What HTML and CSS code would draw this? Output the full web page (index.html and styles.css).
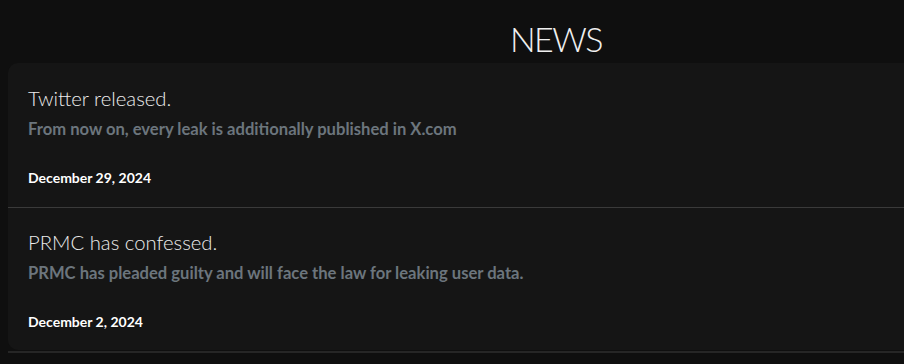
FILE: index.html
```html
<!DOCTYPE html>
<html lang="en">
<head>
    <meta charset="UTF-8">
    <meta name="viewport" content="width=device-width, initial-scale=1.0">
    <title>News</title>
    <link rel="stylesheet" href="styles.css">
</head>
<body>

    <!-- 📰 News -->
    <main class="news">
        <h1 class="news-title">NEWS</h1>

        <div class="news-list">
            <article class="news-item">
                <h2 class="item-title">Twitter released.</h2>
                <p class="item-text">From now on, every leak is additionally published in X.com</p>
                <p class="item-date">December 29, 2024</p>
            </article>
            <article class="news-item">
                <h2 class="item-title">PRMC has confessed.</h2>
                <p class="item-text">PRMC has pleaded guilty and will face the law for leaking user data.</p>
                <p class="item-date">December 2, 2024</p>
            </article>
        </div>
        <div class="news-end"></div>
    </main>

</body>
</html>
```

FILE: styles.css
```css
/* 🌌 Global */
body {
    margin: 0;
    background: #0f0f0f;
    color: #e8e8e8;
    font-family: Lato, 'Liberation Sans', sans-serif;
    overflow: hidden;
}
/* 📰 News container */
.news {
    width: 1096px;
    margin-left: 8px;
}
.news-title {
    margin: 0;
    padding-top: 19px;
    height: 26px;
    text-align: center;
    font-size: 34px;
    font-weight: 300;
    line-height: 40px;
    letter-spacing: -1.5px;
    color: #f0f0f0;
}
.news-list {
    margin-top: 18px;
    background: #151515;
    border-radius: 10px;
}
.news-item {
    padding: 22px 20px 19px;
    border-bottom: 1px solid #3a3a3a;
}
.news-item:last-child {
    padding-top: 21px;
    padding-bottom: 18px;
    border-bottom: none;
}
.item-title {
    margin: 0;
    font-size: 20.3px;
    font-weight: 300;
    line-height: 26px;
    color: #ececec;
}
.item-text {
    margin: 6px 0 0;
    font-size: 16.6px;
    font-weight: 700;
    line-height: 24px;
    color: #6c757d;
}
.item-date {
    margin: 27px 0 0;
    font-size: 14px;
    font-weight: 700;
    line-height: 20px;
    color: #fff;
}
.news-end {
    margin-top: 1px;
    height: 2px;
    background: #262626;
}
```
